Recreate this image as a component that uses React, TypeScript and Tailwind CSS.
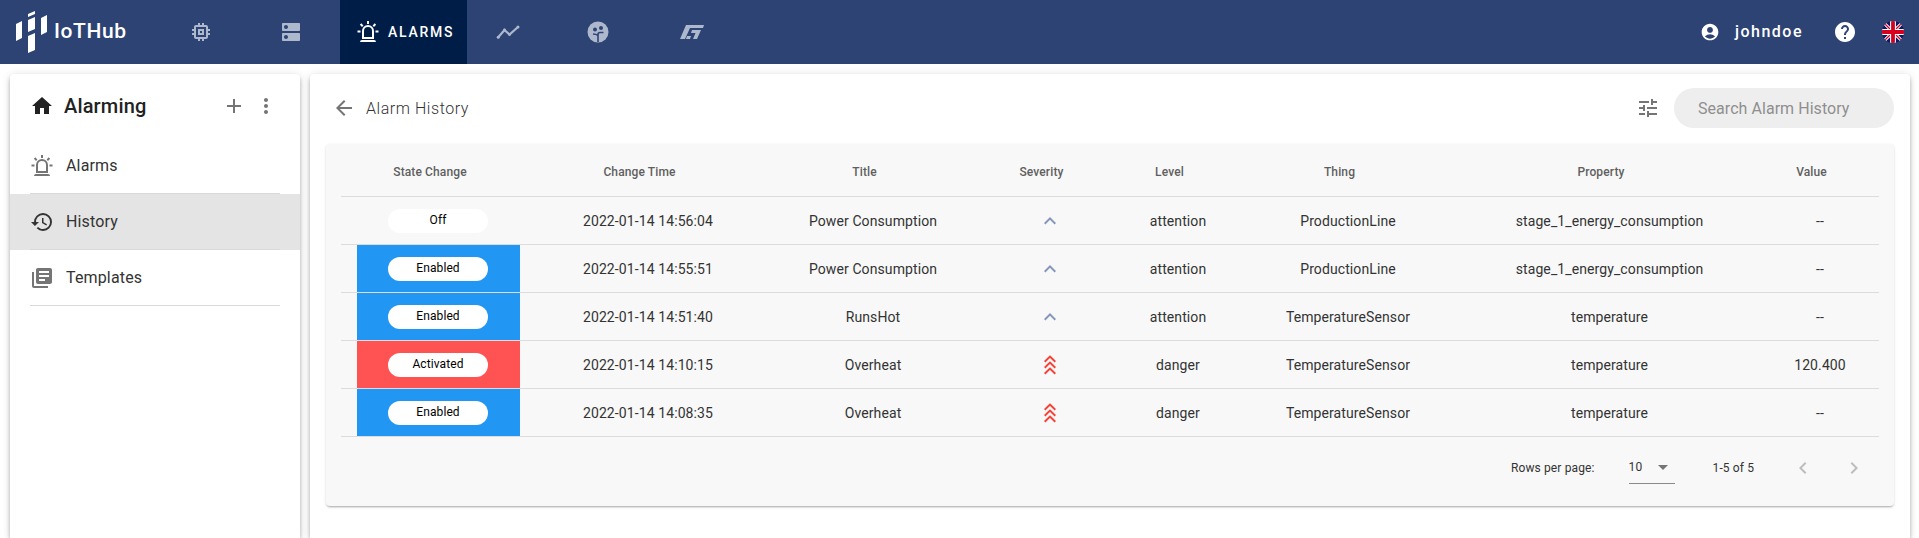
import {
  MdAccountCircle,
  MdAdd,
  MdArrowBack,
  MdArrowDropDown,
  MdChevronLeft,
  MdChevronRight,
  MdDns,
  MdExpandLess,
  MdHelp,
  MdHistory,
  MdHome,
  MdLibraryBooks,
  MdMemory,
  MdMoreVert,
  MdTune,
} from "react-icons/md";

type StateKind = "off" | "enabled" | "activated";

interface AlarmRow {
  state: string;
  kind: StateKind;
  time: string;
  title: string;
  danger: boolean;
  level: string;
  thing: string;
  property: string;
  value: string;
}

const ROWS: AlarmRow[] = [
  { state: "Off", kind: "off", time: "2022-01-14 14:56:04", title: "Power Consumption", danger: false, level: "attention", thing: "ProductionLine", property: "stage_1_energy_consumption", value: "--" },
  { state: "Enabled", kind: "enabled", time: "2022-01-14 14:55:51", title: "Power Consumption", danger: false, level: "attention", thing: "ProductionLine", property: "stage_1_energy_consumption", value: "--" },
  { state: "Enabled", kind: "enabled", time: "2022-01-14 14:51:40", title: "RunsHot", danger: false, level: "attention", thing: "TemperatureSensor", property: "temperature", value: "--" },
  { state: "Activated", kind: "activated", time: "2022-01-14 14:10:15", title: "Overheat", danger: true, level: "danger", thing: "TemperatureSensor", property: "temperature", value: "120.400" },
  { state: "Enabled", kind: "enabled", time: "2022-01-14 14:08:35", title: "Overheat", danger: true, level: "danger", thing: "TemperatureSensor", property: "temperature", value: "--" },
];

const COLUMNS = ["State Change", "Change Time", "Title", "Severity", "Level", "Thing", "Property", "Value"];
const WIDTHS = ["w-[195px]", "w-[224px]", "w-[226px]", "w-[128px]", "w-[128px]", "w-[212px]", "w-[311px]", "w-[114px]"];

const STATE_BG: Record<StateKind, string> = {
  off: "bg-transparent",
  enabled: "bg-[#2196f3]",
  activated: "bg-[#ff5252]",
};

function AlarmLightIcon({ className }: { className?: string }) {
  return (
    <svg viewBox="0 0 24 24" fill="currentColor" className={className} aria-hidden>
      <path d="M6,6.9L3.87,4.78L5.28,3.37L7.4,5.5L6,6.9M13,1V4H11V1H13M20.13,4.78L18,6.9L16.6,5.5L18.72,3.37L20.13,4.78M4.5,10.5V12.5H1.5V10.5H4.5M19.5,10.5H22.5V12.5H19.5V10.5M6,20H18A2,2 0 0,1 20,22H4A2,2 0 0,1 6,20M12,5A6,6 0 0,1 18,11V19H6V11A6,6 0 0,1 12,5M12,7A4,4 0 0,0 8,11V17H16V11A4,4 0 0,0 12,7Z" />
    </svg>
  );
}

function Logo() {
  return (
    <svg width="32" height="42" viewBox="0 0 32 42" fill="#fff" aria-hidden>
      <polygon points="0,13 6,10 6,27 0,30" />
      <polygon points="12,3 19,0 19,3 12,6" />
      <polygon points="12,9 19,6 19,18 12,21" />
      <polygon points="12,25 19,22 19,39 12,42" />
      <polygon points="25,7 31,4 31,21 25,24" />
    </svg>
  );
}

function TrendIcon() {
  return (
    <svg width="24" height="24" viewBox="0 0 24 24" fill="none" stroke="currentColor" strokeWidth="2.2" aria-hidden>
      <polyline points="2,17.5 8.5,10 13.5,14.5 22,7" />
      <circle cx="2.2" cy="17.3" r="1.5" fill="currentColor" stroke="none" />
      <circle cx="8.5" cy="10" r="1.4" fill="currentColor" stroke="none" />
      <circle cx="13.5" cy="14.5" r="1.4" fill="currentColor" stroke="none" />
      <circle cx="22" cy="7" r="1.5" fill="currentColor" stroke="none" />
    </svg>
  );
}

function FaceIcon() {
  return (
    <svg width="24" height="24" viewBox="0 0 24 24" aria-hidden>
      <circle cx="12" cy="12" r="10.5" fill="currentColor" />
      <circle cx="9" cy="9.5" r="2" fill="#2d4373" />
      <circle cx="15" cy="8" r="2" fill="#2d4373" />
      <path d="M12 22V14.5c0-1.5 1-2 2-2h3.5M12 15.5c-1-.8-2.5-1.5-5-1.5" fill="none" stroke="#2d4373" strokeWidth="1.6" />
    </svg>
  );
}

function SlantIcon() {
  return (
    <svg width="24" height="14" viewBox="0 0 24 14" fill="currentColor" aria-hidden>
      <polygon points="6,0 24,0 23,3 10,3 5,14 0,14" />
      <polygon points="12,5 21,5 17,14 13,14 15.5,8 11,8" />
      <polygon points="7,11 11,11 10,14 6,14" />
    </svg>
  );
}

function UkFlag() {
  return (
    <svg width="22" height="22" viewBox="0 0 21 21" aria-hidden>
      <defs>
        <clipPath id="flag-clip">
          <circle cx="10.5" cy="10.5" r="10.5" />
        </clipPath>
      </defs>
      <g clipPath="url(#flag-clip)">
        <rect width="21" height="21" fill="#0a1a6b" />
        <path d="M0 0L21 21M21 0L0 21" stroke="#fff" strokeWidth="3" />
        <path d="M0 0L21 21M21 0L0 21" stroke="#d4001e" strokeWidth="1.2" />
        <path d="M10.5 0V21M0 10.5H21" stroke="#fff" strokeWidth="5.6" />
        <path d="M10.5 0V21M0 10.5H21" stroke="#d4001e" strokeWidth="3.6" />
      </g>
    </svg>
  );
}

function TripleChevron() {
  return (
    <svg width="12" height="20" viewBox="0 0 12 20" fill="none" stroke="#f44336" strokeWidth="2" className="mx-auto block" aria-hidden>
      <polyline points="0.7,6.8 6,1.6 11.3,6.8" />
      <polyline points="0.7,12.8 6,7.6 11.3,12.8" />
      <polyline points="0.7,18.8 6,13.6 11.3,18.8" />
    </svg>
  );
}

function Header() {
  return (
    <header className="flex h-16 shrink-0 items-center bg-[#2d4373] text-[#aeb8cd]">
      <div className="flex w-[189px] shrink-0 items-center pl-4">
        <Logo />
        <span className="ml-[6px] text-[21px] font-medium tracking-[0.6px] text-white">IoTHub</span>
      </div>
      <MdMemory size={24} />
      <MdDns size={24} className="ml-[66px]" />
      <div className="ml-[37px] flex h-16 w-[127px] items-center bg-[#001d47] pl-4 text-white">
        <AlarmLightIcon className="h-6 w-6" />
        <span className="ml-2 text-sm font-medium tracking-[0.125em]">ALARMS</span>
      </div>
      <div className="ml-[29px]">
        <TrendIcon />
      </div>
      <div className="ml-[66px]">
        <FaceIcon />
      </div>
      <div className="ml-[70px]">
        <SlantIcon />
      </div>
      <div className="ml-auto flex items-center text-white">
        <MdAccountCircle size={20} />
        <span className="ml-[15px] text-base font-medium tracking-[1.5px]">johndoe</span>
        <MdHelp size={24} className="ml-[30px]" />
        <div className="ml-[25px] mr-[15px]">
          <UkFlag />
        </div>
      </div>
    </header>
  );
}

function SideItem({
  icon,
  label,
  active,
}: {
  icon: React.ReactNode;
  label: string;
  active?: boolean;
}) {
  return (
    <div className={active ? "bg-[#e4e4e4]" : ""}>
      <div className="mx-5 flex h-14 items-center gap-3 border-b border-[#d9d9d9] text-base tracking-[0.00938em] text-[#333]">
        {icon}
        <span>{label}</span>
      </div>
    </div>
  );
}

function Sidebar() {
  return (
    <aside className="w-[290px] shrink-0 rounded-t bg-white shadow-[0_2px_4px_-1px_rgba(0,0,0,.2),0_4px_5px_0_rgba(0,0,0,.14),0_1px_10px_0_rgba(0,0,0,.12)]">
      <div className="flex h-16 items-center pl-[20px] pr-[22px]">
        <MdHome size={24} className="text-[#222]" />
        <span className="ml-[10px] text-xl font-medium tracking-[0.0075em] text-[#222]">Alarming</span>
        <MdAdd size={24} className="ml-auto text-[#757575]" />
        <MdMoreVert size={24} className="ml-2 text-[#757575]" />
      </div>
      <SideItem label="Alarms" icon={<AlarmLightIcon className="h-6 w-6 text-[#757575]" />} />
      <SideItem label="History" active icon={<MdHistory size={24} className="text-[#333]" />} />
      <SideItem label="Templates" icon={<MdLibraryBooks size={24} className="text-[#757575]" />} />
    </aside>
  );
}

function AlarmTable() {
  return (
    <table className="w-[1538px] table-fixed border-separate border-spacing-0">
      <colgroup>
        {WIDTHS.map((w, i) => (
          <col key={i} className={w} />
        ))}
      </colgroup>
      <thead>
        <tr>
          {COLUMNS.map((c) => (
            <th key={c} className="h-[53px] border-b border-[#dcdcdc] pt-1 text-center text-xs font-medium tracking-[0.01em] text-[#5f5f5f] last:pr-1">
              <span className="inline-flex items-center">
                {c}
                <span className="inline-block w-[17px]" />
              </span>
            </th>
          ))}
        </tr>
      </thead>
      <tbody className="text-center text-sm tracking-[0.1px] text-[#333]">
        {ROWS.map((r) => (
          <tr key={r.time}>
            <td className="h-12 border-b border-[#dcdcdc] px-4 py-0">
              <div className={`flex h-[47px] items-center justify-center pr-px ${STATE_BG[r.kind]}`}>
                <span className="flex h-6 w-[100px] items-center justify-center rounded-full bg-white pb-[2px] text-xs text-black">
                  {r.state}
                </span>
              </div>
            </td>
            <td className="h-12 border-b border-[#dcdcdc]">{r.time}</td>
            <td className="h-12 border-b border-[#dcdcdc]">{r.title}</td>
            <td className="h-12 border-b border-[#dcdcdc]">
              {r.danger ? (
                <TripleChevron />
              ) : (
                <MdExpandLess size={24} className="mx-auto block text-[#8496bb]" />
              )}
            </td>
            <td className="h-12 border-b border-[#dcdcdc]">{r.level}</td>
            <td className="h-12 border-b border-[#dcdcdc]">{r.thing}</td>
            <td className="h-12 border-b border-[#dcdcdc]">{r.property}</td>
            <td className="h-12 border-b border-[#dcdcdc] pr-1">{r.value}</td>
          </tr>
        ))}
      </tbody>
    </table>
  );
}

function Pagination() {
  return (
    <div className="flex h-[69px] items-center justify-end pb-2 pr-[28px] text-xs tracking-[0.01em] text-[#333]">
      <span>Rows per page:</span>
      <div className="relative ml-[34px] flex h-8 w-[46px] items-center justify-between border-b border-[#8a8a8a]">
        <span>10</span>
        <MdArrowDropDown size={24} className="text-[#757575]" />
      </div>
      <span className="ml-[38px]">1-5 of 5</span>
      <MdChevronLeft size={24} className="ml-[37px] text-[#bdbdbd]" />
      <MdChevronRight size={24} className="ml-[27px] text-[#bdbdbd]" />
    </div>
  );
}

function HistoryPanel() {
  return (
    <main className="min-w-0 flex-1 rounded-t bg-white shadow-[0_2px_4px_-1px_rgba(0,0,0,.2),0_4px_5px_0_rgba(0,0,0,.14),0_1px_10px_0_rgba(0,0,0,.12)]">
      <div className="flex items-center pb-4 pl-[22px] pr-4 pt-[14px]">
        <MdArrowBack size={24} className="text-[#757575]" />
        <span className="ml-[10px] pt-px text-base font-light tracking-[0.55px] text-[#333]">Alarm History</span>
        <MdTune size={24} className="ml-auto mr-[14px] text-[#757575]" />
        <input
          readOnly
          placeholder="Search Alarm History"
          className="h-10 w-[220px] rounded-full bg-[#eeeeee] pl-6 text-base tracking-[0.05px] outline-none placeholder:text-[#8f8f8f]"
        />
      </div>
      <div className="mx-4 rounded-[4px] bg-[#f8f8f8] pl-[15px] shadow-[0_2px_2px_-1px_rgba(0,0,0,.25),0_1px_3px_0_rgba(0,0,0,.12)]">
        <AlarmTable />
        <Pagination />
      </div>
    </main>
  );
}

export default function App() {
  return (
    <div className="flex h-screen flex-col overflow-hidden bg-white font-['Roboto',sans-serif]">
      <Header />
      <div className="flex min-h-0 flex-1 gap-[10px] pl-[10px] pr-[9px] pt-[10px]">
        <Sidebar />
        <HistoryPanel />
      </div>
    </div>
  );
}
